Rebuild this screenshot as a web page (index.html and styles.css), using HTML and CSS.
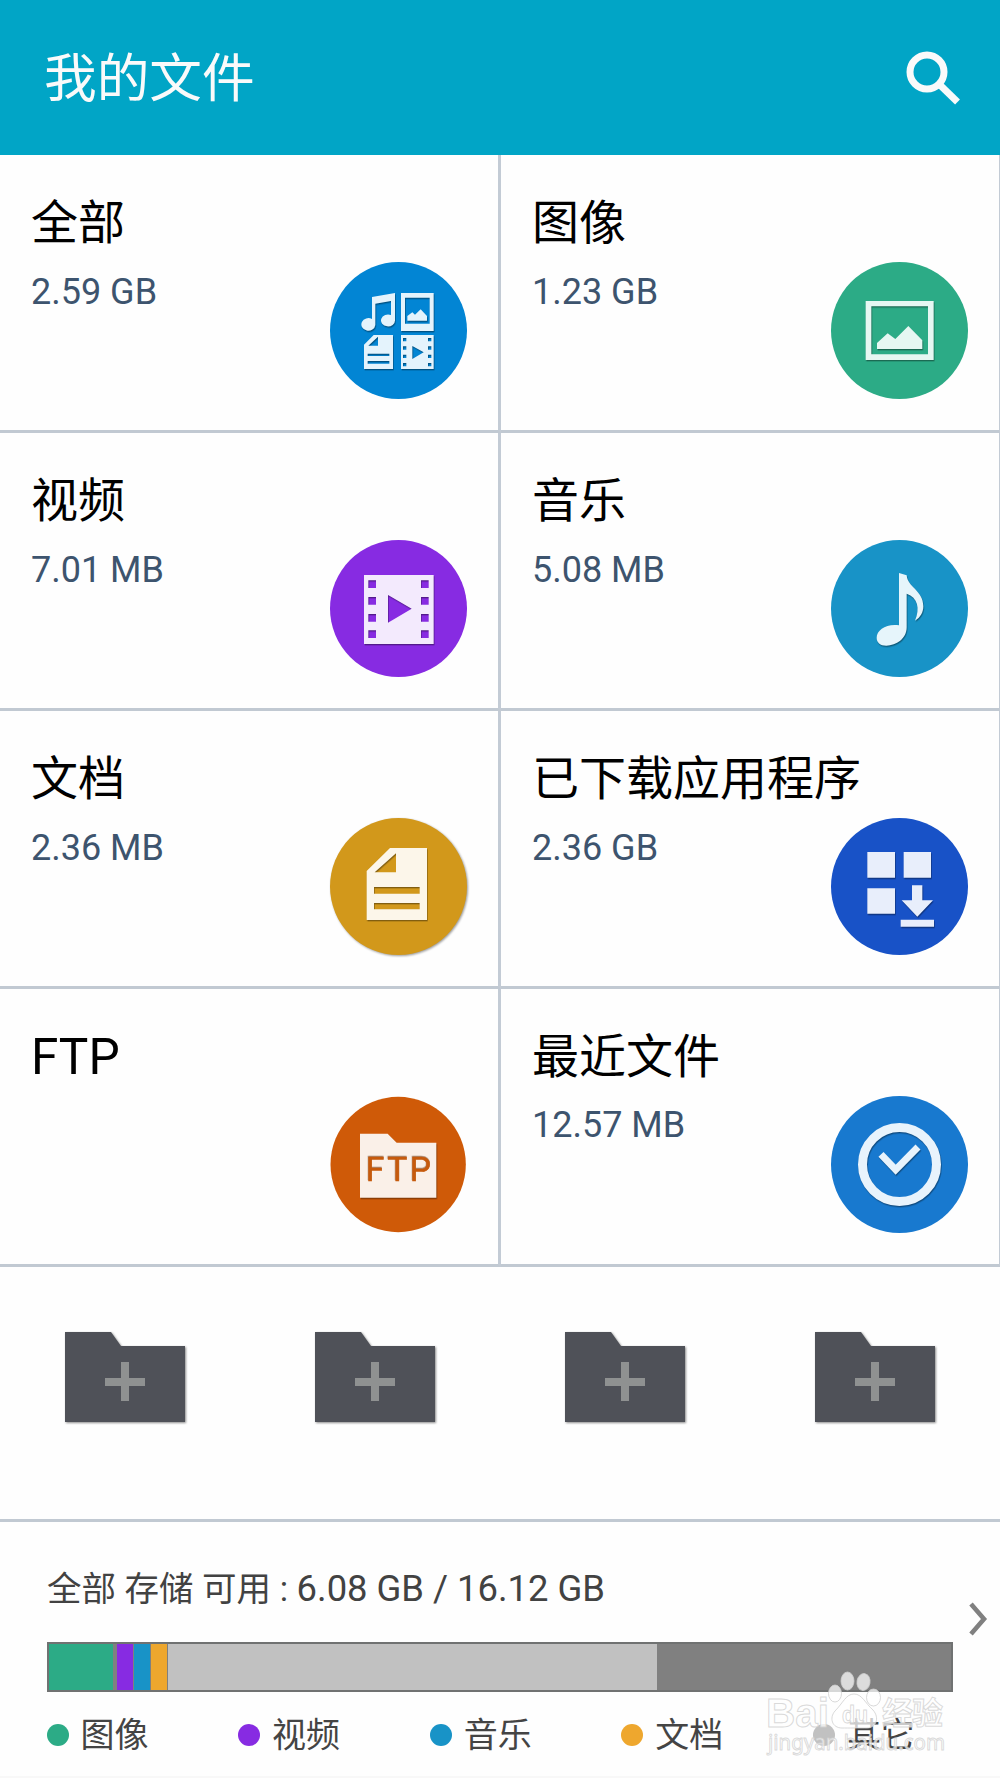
FILE: index.html
```html
<!DOCTYPE html>
<html lang="zh-CN">
<head>
<meta charset="utf-8">
<title>我的文件</title>
<link rel="stylesheet" href="styles.css">
</head>
<body>
<header class="topbar">
  <h1 class="topbar-title">我的文件</h1>
  <svg class="search" viewBox="0 0 56 56"><circle cx="22" cy="22" r="17" fill="none" stroke="#fafafa" stroke-width="7"/><path d="M34 34 52.500 52" stroke="#fafafa" stroke-width="7" fill="none"/></svg>
</header>
<main class="grid">
  <section class="cell">
    <div class="info"><h2 class="name">全部</h2><p class="size">2.59 GB</p></div>
    <svg class="icon" viewBox="30 36 411 411"><circle cx="235.500" cy="241.500" r="205.500" fill="#0285d4"/>
      <g class="glyph" fill="#e4f3fc">
        <path d="M156 141 225 129V211A21 18 0 1 1 213 195V153L166 161V225A21 19 0 1 1 156 207Z"/>
        <path fill-rule="evenodd" d="M243 129H341V243H243ZM255 143V221H329V143Z"/>
        <path d="M262 198 277 187 285 194 302 178 321 198V212H262Z"/>
        <path fill-rule="evenodd" d="M132 284 161 255H219V357H132ZM145 287H174V260ZM143 311V318H208V311ZM143 333V341H208V333Z"/>
        <path fill-rule="evenodd" d="M243 255H341V357H243ZM249 264V274H259V264ZM249 289V299H259V289ZM249 314V324H259V314ZM249 339V349H259V339ZM324 264V274H334V264ZM324 289V299H334V289ZM324 314V324H334V314ZM324 339V349H334V339ZM277 288V327L311 307Z"/>
      </g></svg>
  </section>
  <section class="cell">
    <div class="info"><h2 class="name">图像</h2><p class="size">1.23 GB</p></div>
    <svg class="icon" viewBox="33 36 411 411"><circle cx="238.500" cy="241.500" r="205.500" fill="#2cab86"/>
      <g class="glyph" fill="#e6f7f2">
        <path fill-rule="evenodd" d="M137 153H341V330H137ZM154 169V313H324V169Z"/>
        <path d="M171 279 203 250 226 267 265 228 307 271V297H171Z"/>
      </g></svg>
  </section>
  <section class="cell">
    <div class="info"><h2 class="name">视频</h2><p class="size">7.01 MB</p></div>
    <svg class="icon" viewBox="30 30 411 411"><circle cx="235.500" cy="235.500" r="205.500" fill="#872be2"/>
      <g class="glyph" fill="#f3eafd">
        <path fill-rule="evenodd" d="M132 135H341V342H132ZM145 151V174H168V151ZM145 201V224H168V201ZM145 252V275H168V252ZM145 301V324H168V301ZM303 151V174H326V151ZM303 201V224H326V201ZM303 252V275H326V252ZM303 301V324H326V301ZM204 195V278L275 236Z"/>
      </g></svg>
  </section>
  <section class="cell">
    <div class="info"><h2 class="name">音乐</h2><p class="size">5.08 MB</p></div>
    <svg class="icon" viewBox="33 30 411 411"><circle cx="238.500" cy="235.500" r="205.500" fill="#1893c7"/>
      <path class="glyph" fill="#e6f5fb" d="M237 129 260 136C263 173 310 181 310 229C310 247 301 263 285 272C301 235 293 202 260 191V292C260 326 229 347 199 347C180 347 170 337 170 323C170 300 200 280 237 286Z"/></svg>
  </section>
  <section class="cell">
    <div class="info"><h2 class="name">文档</h2><p class="size">2.36 MB</p></div>
    <svg class="icon icon-raised" viewBox="30 24 411 411"><circle cx="235.500" cy="229.500" r="205.500" fill="#d2981b"/>
      <g class="glyph" fill="#fcf6ea">
        <path fill-rule="evenodd" d="M140 183 210 114H321V330H140ZM164 187H228V130ZM162 231V251H299V231ZM162 279V298H299V279Z"/>
      </g></svg>
  </section>
  <section class="cell">
    <div class="info"><h2 class="name">已下载应用程序</h2><p class="size">2.36 GB</p></div>
    <svg class="icon" viewBox="33 23 411 411"><circle cx="238.500" cy="228.500" r="205.500" fill="#1852c7"/>
      <path class="glyph" fill="#e8eefb" d="M142 125H225V202H142ZM251 125H333V202H251ZM142 234H225V310H142ZM276 225H307V270H339L292 319 245 270H276ZM242 328H342V349H242Z"/></svg>
  </section>
  <section class="cell">
    <div class="info"><h2 class="name name-latin">FTP</h2></div>
    <svg class="icon" viewBox="30 31 411 411"><circle cx="234.500" cy="236.500" r="203" fill="#cf5a08"/>
      <path class="glyph" fill="#faf0e8" d="M120 144H203L230 171H349V336H120Z"/>
      <text class="ftp-label" x="137" y="285" textLength="196">FTP</text></svg>
  </section>
  <section class="cell">
    <div class="info"><h2 class="name">最近文件</h2><p class="size">12.57 MB</p></div>
    <svg class="icon" viewBox="33 32 411 411"><circle cx="238.500" cy="237.500" r="205.500" fill="#1879cf"/>
      <g class="glyph" fill="none" stroke="#e8f3fc"><circle cx="238.500" cy="237.500" r="111" stroke-width="27"/><path d="M183 207 227 253 294 185" stroke-width="21"/></g></svg>
  </section>
</main>
<section class="shortcuts">
  <svg class="folder" viewBox="0 0 120 90"><path fill="#4f5158" d="M0 0H46L56 14H120V90H0Z"/><path fill="#8f9191" d="M56 30H64V46H80V54H64V69H56V54H40V46H56Z"/></svg>
  <svg class="folder" viewBox="0 0 120 90"><path fill="#4f5158" d="M0 0H46L56 14H120V90H0Z"/><path fill="#8f9191" d="M56 30H64V46H80V54H64V69H56V54H40V46H56Z"/></svg>
  <svg class="folder" viewBox="0 0 120 90"><path fill="#4f5158" d="M0 0H46L56 14H120V90H0Z"/><path fill="#8f9191" d="M56 30H64V46H80V54H64V69H56V54H40V46H56Z"/></svg>
  <svg class="folder" viewBox="0 0 120 90"><path fill="#4f5158" d="M0 0H46L56 14H120V90H0Z"/><path fill="#8f9191" d="M56 30H64V46H80V54H64V69H56V54H40V46H56Z"/></svg>
</section>
<section class="storage">
  <div class="storage-main">
    <p class="storage-text">全部 存储 可用 : <span class="figures">6.08 GB / 16.12 GB</span></p>
    <div class="bar">
      <span class="seg green" style="width:64px"></span>
      <span class="seg purple" style="width:16px"></span>
      <span class="seg blue" style="width:16px"></span>
      <span class="seg orange" style="width:16px"></span>
      <span class="seg other" style="width:489px"></span>
    </div>
  </div>
  <svg class="chevron" viewBox="0 0 20 36"><path d="M3 3 16 18 3 33" fill="none" stroke="#808080" stroke-width="4.600"/></svg>
  <ul class="legend">
    <li><i class="dot green"></i>图像</li>
    <li><i class="dot purple"></i>视频</li>
    <li><i class="dot blue"></i>音乐</li>
    <li><i class="dot orange"></i>文档</li>
    <li><i class="dot other"></i>其它</li>
  </ul>
  <svg class="watermark" viewBox="760 1665 190 95">
    <g fill="#fff" fill-opacity=".72" stroke="#d0d0d0" stroke-opacity=".8">
      <ellipse cx="835" cy="1693.500" rx="6.500" ry="8.500"/>
      <ellipse cx="847.500" cy="1681" rx="6.500" ry="9"/>
      <ellipse cx="863.500" cy="1682" rx="6.500" ry="8.500" transform="rotate(10 863.500 1682)"/>
      <ellipse cx="873.500" cy="1697.500" rx="7" ry="8.500"/>
      <path d="M854 1694C862 1694 865 1703 873 1710C880 1718 876 1728 867 1728C860 1728 848 1728 842 1728C832 1728 829 1718 835 1711C843 1703 846 1694 854 1694Z"/>
      <text class="wm-main" x="766" y="1727" textLength="63" lengthAdjust="spacingAndGlyphs">Bai</text>
      <text class="wm-du" x="842" y="1722.500" textLength="26" lengthAdjust="spacingAndGlyphs">du</text>
      <text class="wm-cjk" x="882" y="1724" textLength="61">经验</text>
      <text class="wm-url" x="768" y="1750" textLength="177" lengthAdjust="spacingAndGlyphs">jingyan.baidu.com</text>
    </g>
  </svg>
</section>
</body>
</html>
```
FILE: styles.css
```css
* { box-sizing: border-box; margin: 0; padding: 0; }

body {
  display: flex;
  flex-direction: column;
  width: 1000px;
  height: 1778px;
  overflow: hidden;
  background: #fefefe;
  font-family: Roboto, "Noto Sans CJK SC", sans-serif;
}

svg { display: block; }

.topbar {
  display: flex;
  justify-content: space-between;
  height: 155.600px;
  padding: 0 37px 0 44px;
  background: #01a5c6;
}

.topbar-title {
  padding-top: 39px;
  color: #fafafa;
  font-size: 52.700px;
  font-weight: 400;
  line-height: 80px;
}

.search { width: 56px; height: 56px; margin-top: 49.500px; margin-right: 2px; }

.grid {
  display: grid;
  grid-template-columns: 501px 499px;
  grid-template-rows: repeat(4, 277.850px);
}

.cell {
  display: flex;
  justify-content: space-between;
  padding: 0 31px;
  border-right: 3px solid #c3cbd5;
  border-bottom: 3px solid #c1c9d2;
}

.cell:nth-child(even) { border-right-width: 1px; }

.info { padding-top: 38px; white-space: nowrap; width: 299px; }

.name { color: #000; font-size: 47px; font-weight: 400; line-height: 60px; }

.name-latin { font-size: 49.500px; }

.size { margin-top: 17.500px; color: #3d546e; font-size: 36px; line-height: 42px; }

.icon { flex: none; width: 137px; height: 137px; margin-top: 107px; }

.icon-raised { overflow: visible; filter: drop-shadow(1px 1px 1px rgba(0, 0, 0, .4)); }

.glyph { filter: drop-shadow(2px 4px 2px rgba(0, 0, 0, .38)); }

.ftp-label {
  fill: #c65a0c;
  font: 400 101px Roboto, sans-serif;
  stroke: #c65a0c;
  stroke-width: 1.500px;
  filter: drop-shadow(-1px -3px 1px rgba(90, 35, 0, .5));
}

.shortcuts {
  display: grid;
  grid-template-columns: repeat(4, 250px);
  justify-items: center;
  height: 255.400px;
  padding-top: 65px;
  border-bottom: 3px solid #c1c9d2;
}

.folder { width: 120px; height: 90px; overflow: visible; filter: drop-shadow(1px 1px 1px rgba(0, 0, 0, .45)); }

.storage {
  position: relative;
  display: grid;
  grid-template-columns: 906px 20px;
  grid-template-rows: 171px 83px;
  column-gap: 15px;
  padding-left: 47px;
  border-bottom: 2px solid #f8f8f8;
}

.storage-main { display: flex; flex-direction: column; }

.storage-text {
  height: 50px;
  margin-top: 42px;
  color: #424242;
  font-size: 34.500px;
  font-weight: 400;
  line-height: 50px;
  white-space: pre;
}

.figures { font-size: 36.400px; }

.bar {
  display: flex;
  height: 50px;
  margin-top: 28px;
  border: 2px solid #707272;
  background: #808080;
}

.seg { margin-right: 1px; }
.seg.green { margin-right: 4px; }
.green { background: #2cab86; }
.purple { background: #872be2; }
.blue { background: #1893c7; }
.orange { background: #eea72e; }
.other { background: #c1c1c1; }

.chevron { width: 20px; height: 36px; margin-top: 79px; }

.legend {
  display: grid;
  grid-column: 1 / -1;
  grid-template-columns: repeat(5, 191.600px);
  list-style: none;
  color: #444;
  font-size: 34px;
  line-height: 50px;
  padding-top: 16.500px;
  margin-left: -.500px;
  margin-right: -60px;
}

.legend li { display: flex; align-items: center; gap: 12px; height: 50px; }

.dot { width: 22px; height: 22px; border-radius: 50%; }

.watermark { position: absolute; left: 760px; top: 143px; width: 190px; height: 95px; }

.wm-main { font: 700 41px "Liberation Sans", sans-serif; }
.wm-du { font: 700 24px "Liberation Sans", sans-serif; }
.wm-cjk { font: 700 31px "Noto Sans CJK SC", sans-serif; }
.wm-url { font: 400 22px "Noto Sans", sans-serif; }
```
